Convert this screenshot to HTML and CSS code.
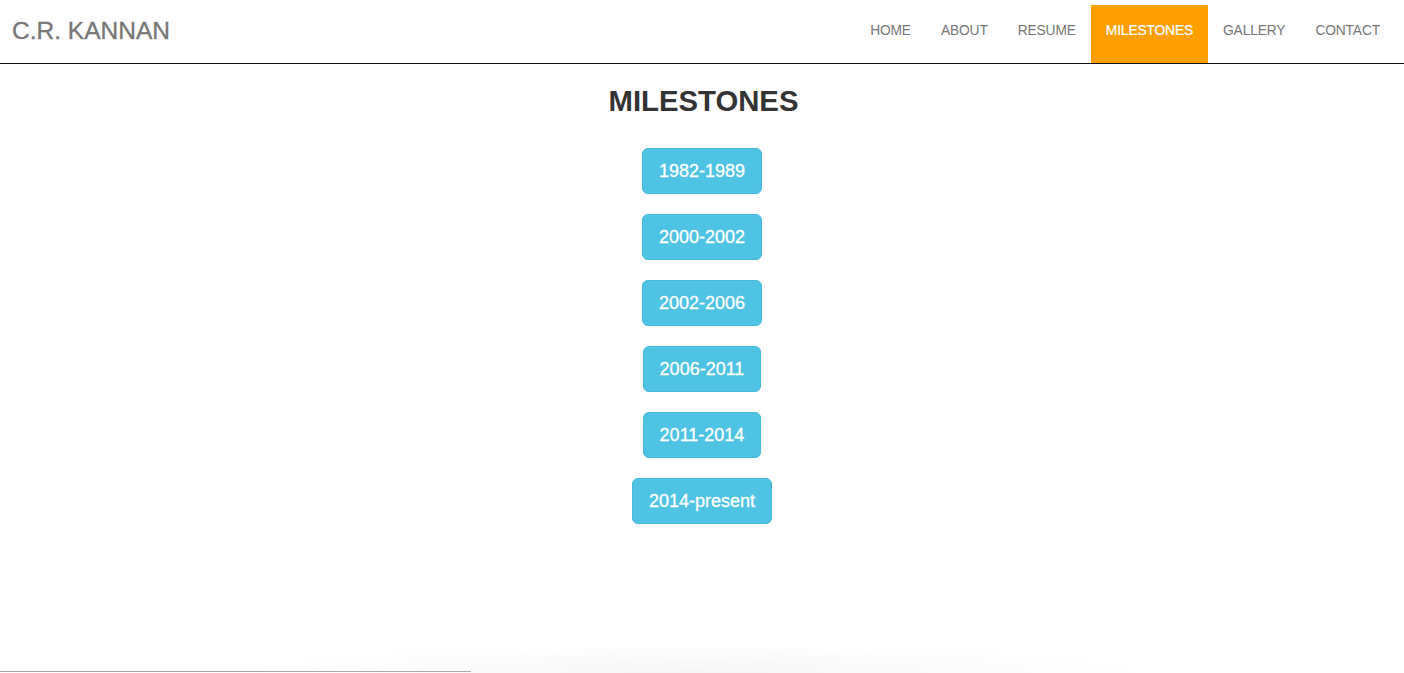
FILE: index.html
```html
<!DOCTYPE html>
<html lang="en">
<head>
<meta charset="utf-8">
<title>C.R. Kannan - Milestones</title>
<link rel="stylesheet" href="styles.css">
</head>
<body>
<header class="navbar">
  <a class="brand" href="#">C.R. KANNAN</a>
  <nav>
    <ul class="nav">
      <li><a href="#">HOME</a></li>
      <li><a href="#">ABOUT</a></li>
      <li><a href="#">RESUME</a></li>
      <li class="active"><a href="#">MILESTONES</a></li>
      <li><a href="#">GALLERY</a></li>
      <li><a href="#">CONTACT</a></li>
    </ul>
  </nav>
</header>
<main class="content">
  <h2 class="title">MILESTONES</h2>
  <div class="buttons">
    <button class="btn">1982-1989</button>
    <button class="btn">2000-2002</button>
    <button class="btn">2002-2006</button>
    <button class="btn">2006-2011</button>
    <button class="btn">2011-2014</button>
    <button class="btn">2014-present</button>
  </div>
</main>
<div class="bottom-shade"></div>
<div class="bottom-line"></div>
</body>
</html>
```

FILE: styles.css
```css
* { box-sizing: border-box; }
html, body { margin: 0; padding: 0; }
body {
  font-family: "Liberation Sans", Arial, Helvetica, sans-serif;
  background: #fff;
  color: #333;
  height: 673px;
  overflow: hidden;
}
.navbar {
  display: flex;
  justify-content: space-between;
  align-items: flex-start;
  height: 64px;
  border-bottom: 1px solid #111;
  padding: 0 9px 0 12px;
}
.brand {
  font-size: 24.5px;
  line-height: 28px;
  padding-top: 17px;
  color: #777;
  text-decoration: none;
  -webkit-text-stroke: 0.35px #777;
}
.nav {
  list-style: none;
  margin: 5px 0 0 0;
  padding: 0;
  display: flex;
}
.nav a {
  display: block;
  padding: 16px 15px 22px;
  line-height: 20px;
  font-size: 13.8px;
  letter-spacing: -0.15px;
  color: #777;
  text-decoration: none;
}
.nav .active a {
  background: #ffa000;
  color: #fff;
  -webkit-text-stroke: 0.2px #fff;
}
.content {
  display: flex;
  flex-direction: column;
  align-items: center;
}
.title {
  margin: 20px 0 31px;
  padding-left: 3px;
  font-size: 29.3px;
  line-height: 33px;
  font-weight: bold;
  color: #333;
}
.buttons {
  display: flex;
  flex-direction: column;
  align-items: center;
  gap: 20px;
}
.btn {
  font-family: "Liberation Sans", Arial, Helvetica, sans-serif;
  font-size: 18px;
  line-height: 24px;
  padding: 10px 16px 10px;
  height: 46px;
  color: #fff;
  background: #4ec3e3;
  border: 1px solid #46b8da;
  border-radius: 6px;
  cursor: pointer;
  -webkit-text-stroke: 0.3px #fff;
}
.bottom-shade {
  position: fixed;
  left: 230px;
  width: 930px;
  bottom: 0;
  height: 30px;
  background: radial-gradient(ellipse 50% 100% at 50% 100%, rgba(0,0,0,0.035), rgba(0,0,0,0));
  pointer-events: none;
}
.bottom-line {
  position: fixed;
  left: 0;
  bottom: 1px;
  width: 471px;
  height: 1px;
  background: #aaa;
}
```
